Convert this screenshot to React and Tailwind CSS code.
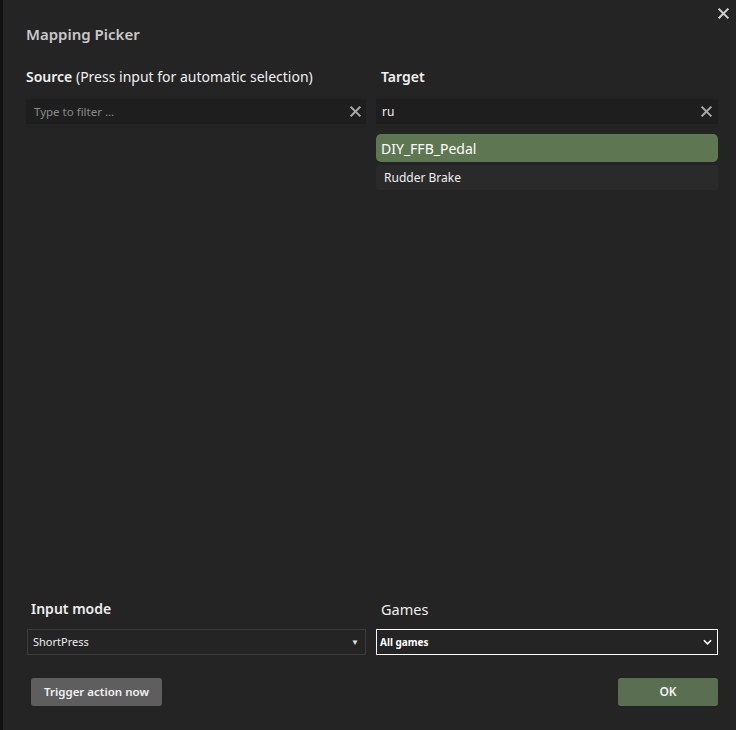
import React from "react";

const X = ({ className }) => (
  <svg viewBox="0 0 12 12" className={className} fill="none" stroke="currentColor" strokeWidth="2.2" strokeLinecap="square">
    <path d="M1.5 1.5 L10.5 10.5 M10.5 1.5 L1.5 10.5" />
  </svg>
);

export default function App() {
  return (
    <div className="w-[736px] h-[730px] flex bg-[#242424] text-[#e6e6e6]" style={{ fontFamily: '"Noto Sans", "Open Sans", sans-serif' }}>
      <div className="w-[3px] bg-[#111111] shrink-0" />
      <div className="flex-1 relative flex flex-col">
        <button className="absolute right-[7px] top-[8px] text-[#cfcfcf]">
          <X className="w-[11px] h-[11px]" />
        </button>
        <div className="pl-[23px] pt-[24px] h-[67px] text-[15px] font-semibold text-[#c9c9c9] leading-[20px]">Mapping Picker</div>
        <div className="flex-1 flex gap-[10px] pl-[23px] pr-[18px]">
          <div className="w-[340px] flex flex-col">
            <div className="text-[14px] leading-[20px] h-[32px] text-[#f0f0f0]">
              <span className="font-semibold">Source</span> (Press input for automatic selection)
            </div>
            <div className="h-[25px] bg-[#1e1e1e] flex items-center pl-[8px] pr-[5px]">
              <span className="flex-1 text-[11.5px] text-[#8a8a8a]">Type to filter ...</span>
              <X className="w-[11px] h-[11px] text-[#a8a8a8]" />
            </div>
          </div>
          <div className="flex-1 flex flex-col">
            <div className="text-[14px] leading-[20px] h-[32px] pl-[5px] font-semibold text-[#f0f0f0]">Target</div>
            <div className="h-[25px] bg-[#1e1e1e] flex items-center pl-[6px] pr-[6px]">
              <span className="flex-1 text-[12px] text-[#f0f0f0]">ru</span>
              <X className="w-[11px] h-[11px] text-[#a8a8a8]" />
            </div>
            <div className="mt-[10px] h-[28px] rounded-[5px] bg-[#5e7752] flex items-center pl-[5px] text-[14px] text-white">DIY_FFB_Pedal</div>
            <div className="mt-[3px] h-[25px] rounded-[3px] bg-[#2a2a2a] flex items-center pl-[8px] text-[12px] text-[#f0f0f0]">Rudder Brake</div>
          </div>
        </div>
        <div className="flex gap-[10px] pl-[24px] pr-[18px]">
          <div className="w-[339px] flex flex-col">
            <div className="pl-[4px] text-[14px] leading-[20px] font-semibold text-[#eeeeee] h-[30px]">Input mode</div>
            <div className="h-[26px] border border-[#3a3a3a] flex items-center pl-[5px] pr-[6px]">
              <span className="flex-1 text-[11px] text-[#ececec]">ShortPress</span>
              <span className="text-[8px] text-[#e0e0e0]">▼</span>
            </div>
          </div>
          <div className="flex-1 flex flex-col">
            <div className="pl-[5px] text-[14.5px] leading-[20px] text-[#eeeeee] h-[30px]">Games</div>
            <div className="h-[26px] border border-white flex items-center pl-[3px] pr-[5px]">
              <span className="flex-1 text-[10px] font-bold text-white">All games</span>
              <svg viewBox="0 0 10 6" className="w-[9px] h-[6px]" fill="none" stroke="white" strokeWidth="1.8">
                <path d="M1 1 L5 5 L9 1" />
              </svg>
            </div>
          </div>
        </div>
        <div className="flex justify-between items-center pl-[28px] pr-[18px] pt-[23px] pb-[24px]">
          <button className="w-[131px] h-[28px] rounded-[3px] bg-[#5e5e5e] text-[11.5px] font-semibold text-[#f2f2f2]">Trigger action now</button>
          <button className="w-[100px] h-[28px] rounded-[3px] bg-[#5a6e51] text-[12px] font-semibold text-[#f2f2f2]">OK</button>
        </div>
      </div>
    </div>
  );
}
